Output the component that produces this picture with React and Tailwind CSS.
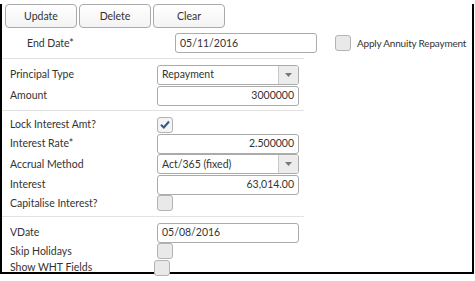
import React from "react";

const font = { fontFamily: "Lato, 'Liberation Sans', sans-serif" };

function Check({ checked = false, className = "" }) {
  return (
    <div
      className={
        "shrink-0 w-[16px] h-[16px] rounded-[3px] border border-[#b3b3b3] flex items-center justify-center " +
        (checked ? "bg-[#f4f4f4] " : "bg-[#e9e9e9] ") +
        className
      }
    >
      {checked && (
        <svg width="10" height="9" viewBox="0 0 10 9">
          <path d="M1 4.8 L3.8 7.5 L9 1.5" fill="none" stroke="#2c5b8c" strokeWidth="2" />
        </svg>
      )}
    </div>
  );
}

function Input({ value, right = false }) {
  return (
    <div
      className={
        "shrink-0 w-[142px] h-[20px] rounded-[3px] border border-[#ababab] bg-white flex items-center px-[4px] text-[#333] " +
        (right ? "justify-end" : "justify-start")
      }
    >
      {value}
    </div>
  );
}

function Select({ value }) {
  return (
    <div className="shrink-0 w-[142px] h-[20px] rounded-[3px] border border-[#ababab] bg-white flex items-stretch text-[#333]">
      <div className="flex-1 flex items-center px-[4px]">{value}</div>
      <div className="w-[20px] border-l border-[#c8c8c8] bg-[#ececec] rounded-r-[2px] flex items-center justify-center">
        <svg width="7" height="4" viewBox="0 0 7 4">
          <path d="M0 0 L7 0 L3.5 4 Z" fill="#6f7a85" />
        </svg>
      </div>
    </div>
  );
}

function Row({ label, h = "h-[21px]", lw = "w-[155px]", children }) {
  return (
    <div className={"flex items-center " + h}>
      <div className={"shrink-0 pl-[8px] text-[#333] whitespace-nowrap " + lw}>{label}</div>
      {children}
    </div>
  );
}

function Sep({ mt, mb }) {
  return <div className={"h-px w-[302px] bg-[#e2e2e2] " + mt + " " + mb} />;
}

function Btn({ children }) {
  return (
    <div className="shrink-0 w-[72px] h-[24px] rounded-[4px] border border-[#a9a9a9] bg-gradient-to-b from-white to-[#f3f3f3] flex items-center justify-center text-[#333]">
      {children}
    </div>
  );
}

export default function App() {
  return (
    <div className="w-[475px] h-[281px] bg-white text-[10.5px] leading-none" style={font}>
      <div className="mt-[10px] w-[474px] h-[270px] border-l-2 border-r-2 border-b-2 border-black">
        <div className="-mt-[6px] pl-[3px] flex gap-[2px]">
          <Btn>Update</Btn>
          <Btn>Delete</Btn>
          <Btn>Clear</Btn>
        </div>
        <div className="mt-[5px] h-[20px] flex items-center">
          <div className="shrink-0 w-[173px] pl-[25px] text-[#333] whitespace-nowrap">End Date*</div>
          <Input value="05/11/2016" />
          <Check className="ml-[18px]" />
          <div className="ml-[6px] text-[#333] whitespace-nowrap text-[10px] tracking-[-0.2px]">Apply Annuity Repayment</div>
        </div>
        <Sep mt="mt-[5px]" mb="mb-[5px]" />
        <Row label="Principal Type">
          <Select value="Repayment" />
        </Row>
        <Row label="Amount">
          <Input value="3000000" right />
        </Row>
        <Sep mt="mt-[4px]" mb="mb-[5px]" />
        <Row label="Lock Interest Amt?" h="h-[17px]">
          <Check checked />
        </Row>
        <Row label="Interest Rate*" h="h-[21px]">
          <Input value="2.500000" right />
        </Row>
        <Row label="Accrual Method" h="h-[20px]">
          <Select value="Act/365 (fixed)" />
        </Row>
        <Row label="Interest" h="h-[21px]">
          <Input value="63,014.00" right />
        </Row>
        <Row label="Capitalise Interest?" h="h-[16px]">
          <Check />
        </Row>
        <Sep mt="mt-[5px]" mb="mb-[5px]" />
        <Row label="VDate" h="h-[21px]">
          <Input value="05/08/2016" />
        </Row>
        <Row label="Skip Holidays" h="h-[16px]">
          <Check />
        </Row>
        <Row label="Show WHT Fields" h="h-[17px]" lw="w-[152px]">
          <Check />
        </Row>
      </div>
    </div>
  );
}
